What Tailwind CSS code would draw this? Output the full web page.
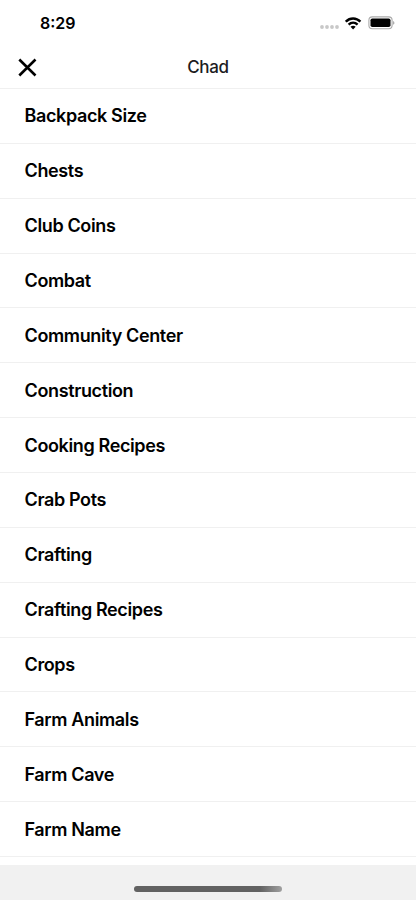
<!DOCTYPE html>
<html lang="en"><head><meta charset="utf-8"><title>Chad</title>
<script src="https://cdn.jsdelivr.net/npm/@tailwindcss/browser@4"></script></head>
<body class="w-[416px] h-[900px] overflow-hidden bg-white font-['Inter',sans-serif] text-black">
<div class="flex h-[900px] flex-col">
<div class="flex h-[46px] items-center justify-between pl-10 pr-[21.5px] shrink-0"><span class="text-base font-semibold">8:29</span>
<div class="flex items-center">
<svg width="20" height="6" viewBox="0 0 20 6" class="mt-2 mr-[5px]" fill="#c8c8c8"><circle cx="2" cy="3" r="1.9"/><circle cx="7" cy="3" r="1.9"/><circle cx="12" cy="3" r="1.9"/><circle cx="17" cy="3" r="1.9"/></svg>
<svg width="17" height="13" viewBox="0 0 17 13" class="mr-[5.5px]" fill="none" stroke="#000" stroke-width="2.4"><path d="M.8 4.7C5 .5 11.2 .5 15.4 4.7M3.6 7.6C6.2 5.2 10 5.2 12.6 7.6"/><path d="M8.1 12.4L5.5 9.8C7 8.5 9.2 8.5 10.7 9.8Z" fill="#000" stroke="none"/></svg>
<svg width="27" height="14" viewBox="0 0 27 14"><rect x=".9" y=".9" width="23.2" height="11.8" rx="3.4" fill="#fff" stroke="#aaa" stroke-width="1.1"/><rect x="2.5" y="2.5" width="20" height="8.6" rx="1.8" fill="#000"/><path d="M25.3 4.9c1.4.7 1.4 3.1 0 3.8z" fill="#888"/></svg>
</div></div>
<header class="grid h-[43px] shrink-0 grid-cols-[1fr_auto_1fr] items-center border-b border-[#f0f0f0] px-[18px]">
<svg width="19" height="19" viewBox="0 0 19 19"><path d="M1.3 1.5l16.2 16M17.5 1.5l-16.2 16" stroke="#000" stroke-width="2.6"/></svg>
<h1 class="pt-0.5 text-[17px] font-medium tracking-[-0.3px] text-[#1c1c1e]">Chad</h1></header>
<ul id="list" class="flex-1 overflow-hidden text-[18px] font-semibold tracking-[-0.37px]"></ul>
<footer class="flex h-[35px] shrink-0 items-end justify-center bg-[#f1f1f1] pb-[8.5px]"><div class="h-[5.5px] w-[148px] rounded-full bg-linear-to-r from-[#626262] from-85% to-[#a0a0a0]"></div></footer></div>
<script>
document.getElementById('list').innerHTML=['Backpack Size','Chests','Club Coins','Combat','Community Center','Construction','Cooking Recipes','Crab Pots','Crafting','Crafting Recipes','Crops','Farm Animals','Farm Cave','Farm Name'].map(t=>'<li class="flex h-[54.86px] items-center border-b border-[#f0f0f0] pl-[24.5px]"><span>'+t+'</span></li>').join('');
</script></body></html>
